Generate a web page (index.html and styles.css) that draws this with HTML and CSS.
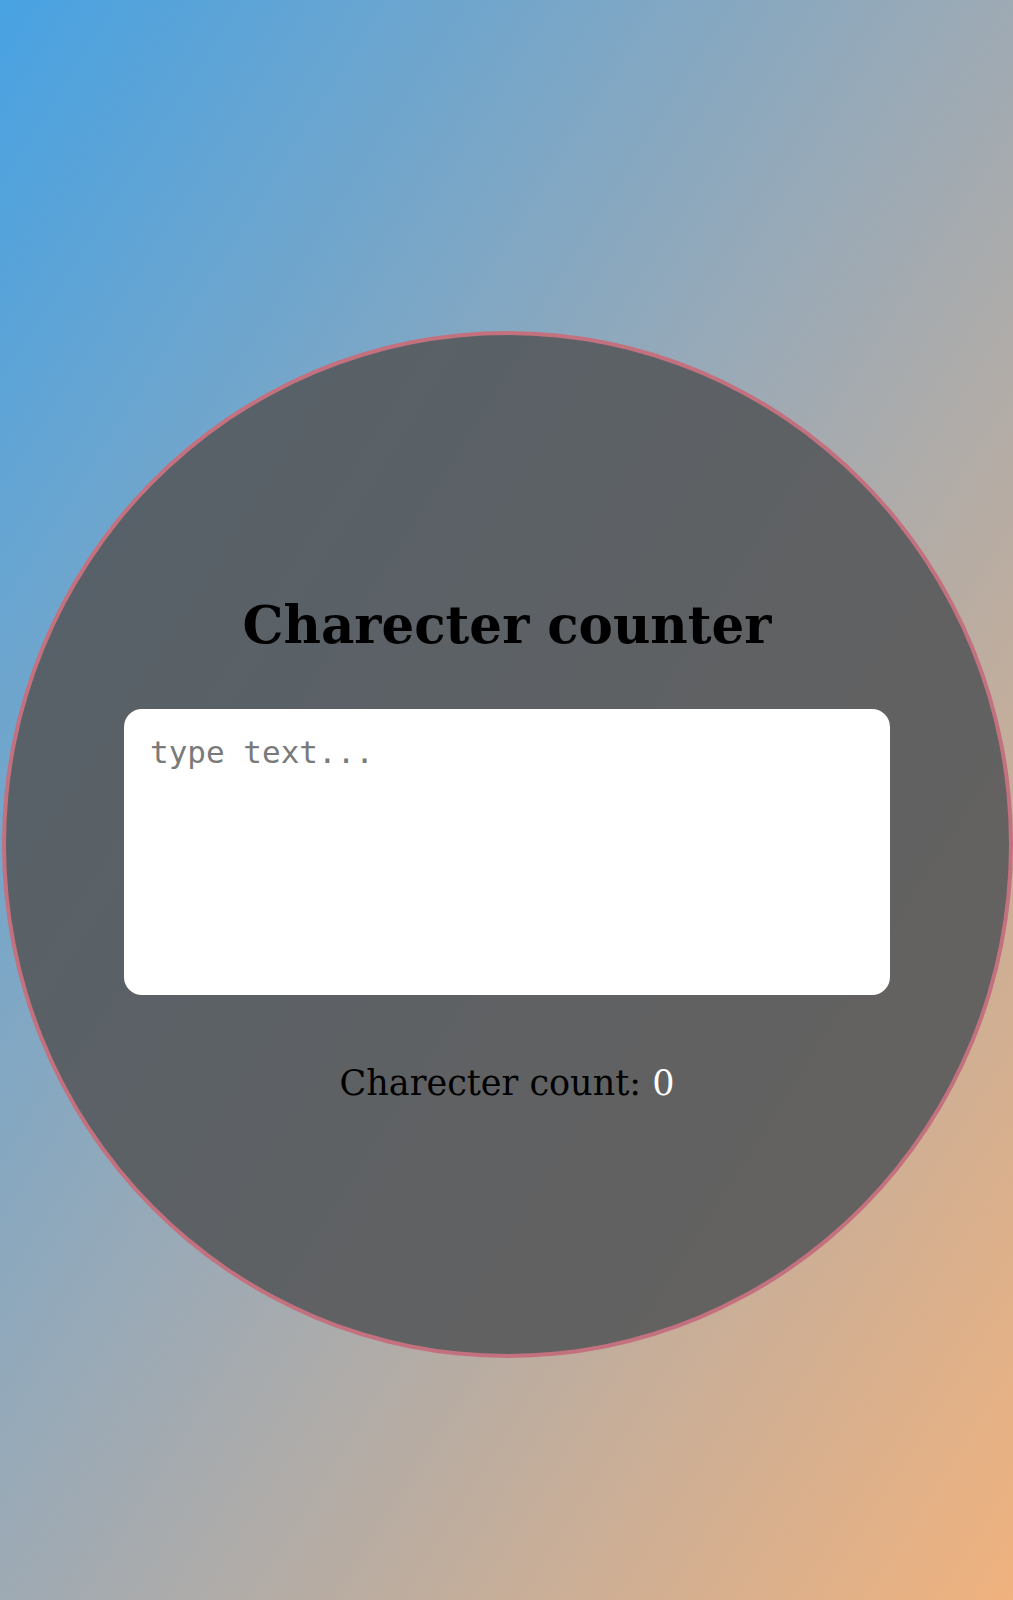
FILE: index.html
```html
<!DOCTYPE html>
<html lang="en">
<head>
<meta charset="utf-8">
<title>Charecter counter</title>
<link rel="stylesheet" href="styles.css">
</head>
<body>
<main class="page">
  <section class="circle">
    <h1 class="title">Charecter counter</h1>
    <textarea class="input" placeholder="type text..."></textarea>
    <p class="count">Charecter count: <span class="count-value">0</span></p>
  </section>
</main>
</body>
</html>
```

FILE: styles.css
```css
html, body {
  margin: 0;
  padding: 0;
}

body {
  min-height: 1600px;
  background: linear-gradient(to bottom right, #48a2e2 0%, #9eaab4 50%, #f0b27e 100%);
  font-family: "DejaVu Serif", "Liberation Serif", serif;
}

.page {
  display: flex;
  justify-content: center;
  padding-top: 331px;
  padding-left: 1px;
}

.circle {
  box-sizing: border-box;
  width: 1011px;
  height: 1027px;
  border: 4px solid #c4717f;
  border-radius: 50%;
  background: rgba(84, 86, 89, 0.87);
  display: flex;
  flex-direction: column;
  align-items: center;
  padding-top: 255px;
}

.title {
  margin: 0;
  font-size: 51.5px;
  line-height: 70px;
  font-weight: bold;
  color: #000;
}

.input {
  box-sizing: border-box;
  margin-top: 49px;
  width: 766px;
  height: 286px;
  border: none;
  border-radius: 18px;
  background: #fff;
  padding: 25px 26px;
  font-family: "DejaVu Sans Mono", "Liberation Mono", monospace;
  font-size: 31px;
  line-height: 36px;
  resize: none;
  outline: none;
}

.input::placeholder {
  color: #7a7a7a;
}

.count {
  margin: 66px 0 0;
  font-size: 35px;
  line-height: 44px;
  color: #000;
}

.count-value {
  color: #fff;
}
```
